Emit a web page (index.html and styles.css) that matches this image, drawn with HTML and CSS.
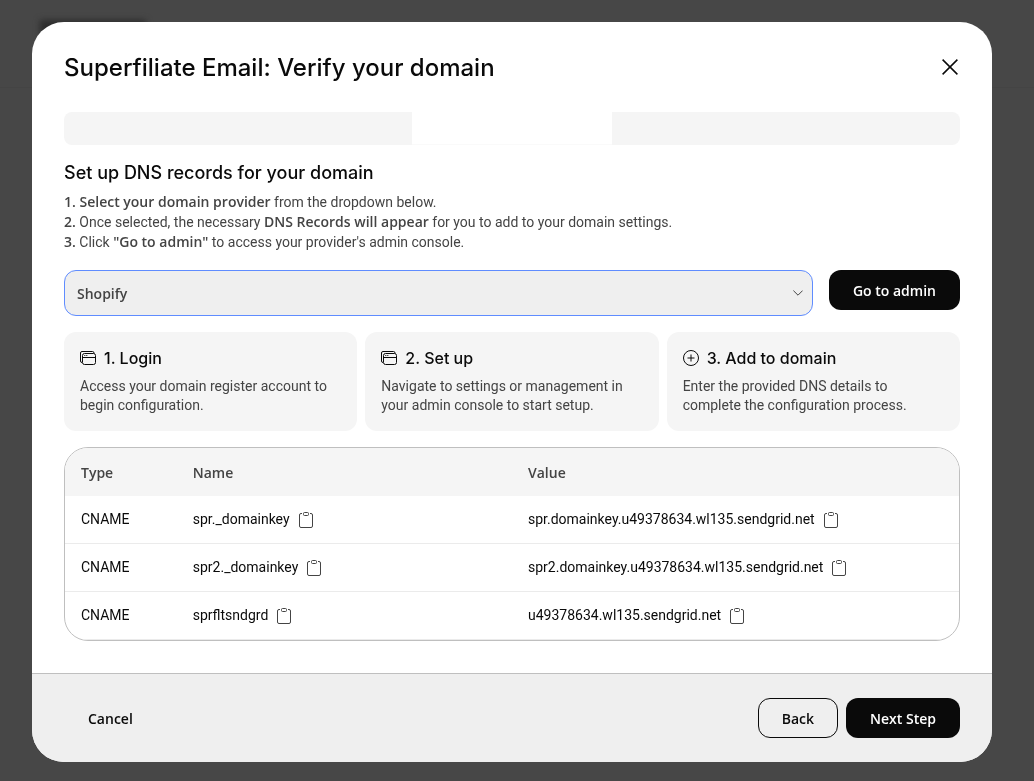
FILE: index.html
```html
<!DOCTYPE html>
<html lang="en">
<head>
    <meta charset="UTF-8">
    <meta name="viewport" content="width=device-width, initial-scale=1.0">
    <title>Superfiliate Email: Verify your domain</title>
    <link rel="stylesheet" href="styles.css">
</head>
<body>

    <svg class="sprite" width="0" height="0" aria-hidden="true">
        <symbol id="icon-window" viewBox="0 0 16 16">
            <path d="M2 12.5A1.5 1.5 0 0 1 .5 11V3A1.5 1.5 0 0 1 2 1.5h10.5A1.5 1.5 0 0 1 14 3v.5"/>
            <rect x="2.5" y="3.5" width="13" height="11" rx="2"/>
            <path d="M2.5 7.5h13M4.3 5.5h1M6.3 5.5h1"/>
        </symbol>
        <symbol id="icon-plus" viewBox="0 0 16 16">
            <circle cx="8" cy="8" r="7.5"/>
            <path d="M8 4.5v7M4.5 8h7"/>
        </symbol>
        <symbol id="icon-copy" viewBox="0 0 14 16">
            <path d="M3 1.5H2A1.5 1.5 0 0 0 .5 3v11A1.5 1.5 0 0 0 2 15.5h10a1.5 1.5 0 0 0 1.5-1.5V3A1.5 1.5 0 0 0 12 1.5h-1"/>
            <rect x="4.5" y=".5" width="5" height="3" rx="1"/>
        </symbol>
    </svg>

    <div class="backdrop">
        <div class="page-title-blur"></div>
    </div>

    <div class="overlay">
        <div class="modal" role="dialog" aria-modal="true" aria-labelledby="modal-title">
            <div class="modal-body">
                <div class="modal-header">
                    <h1 id="modal-title">Superfiliate Email: Verify your domain</h1>
                    <button type="button" class="close" aria-label="Close">
                        <svg width="16" height="16" viewBox="0 0 16 16"><path d="M.6.6l14.8 14.8M15.4.6L.6 15.4"/></svg>
                    </button>
                </div>

                <div class="steps">
                    <div class="step"></div>
                    <div class="step current"></div>
                    <div class="step"></div>
                </div>

                <h2>Set up DNS records for your domain</h2>
                <div class="instructions">
                    <p><strong>1. Select your domain provider</strong> from the dropdown below.</p>
                    <p><strong>2.</strong> Once selected, the necessary <strong>DNS Records will appear</strong> for you to add to your domain settings.</p>
                    <p><strong>3.</strong> Click <strong>"Go to admin"</strong> to access your provider's admin console.</p>
                </div>

                <div class="provider">
                    <div class="select-wrap">
                        <select id="provider" aria-label="Domain provider">
                            <option>Shopify</option>
                        </select>
                        <svg class="chevron" width="10" height="6" viewBox="0 0 10 6"><path d="M.4.6L5 5.2 9.6.6"/></svg>
                    </div>
                    <button type="button" class="btn btn-dark">Go to admin</button>
                </div>

                <div class="cards">
                    <div class="card">
                        <h3><svg class="icon" width="16" height="16"><use href="#icon-window"/></svg>1. Login</h3>
                        <p>Access your domain register account to begin configuration.</p>
                    </div>
                    <div class="card">
                        <h3><svg class="icon" width="16" height="16"><use href="#icon-window"/></svg>2. Set up</h3>
                        <p>Navigate to settings or management in your admin console to start setup.</p>
                    </div>
                    <div class="card">
                        <h3><svg class="icon" width="16" height="16"><use href="#icon-plus"/></svg>3. Add to domain</h3>
                        <p>Enter the provided DNS details to complete the configuration process.</p>
                    </div>
                </div>

                <div class="table-wrap">
                    <table>
                        <thead>
                            <tr>
                                <th class="col-type">Type</th>
                                <th class="col-name">Name</th>
                                <th>Value</th>
                            </tr>
                        </thead>
                        <tbody>
                            <tr>
                                <td>CNAME</td>
                                <td><div class="record">spr._domainkey <button type="button" class="copy" aria-label="Copy name"><svg width="14" height="16"><use href="#icon-copy"/></svg></button></div></td>
                                <td><div class="record">spr.domainkey.u49378634.wl135.sendgrid.net <button type="button" class="copy" aria-label="Copy value"><svg width="14" height="16"><use href="#icon-copy"/></svg></button></div></td>
                            </tr>
                            <tr>
                                <td>CNAME</td>
                                <td><div class="record">spr2._domainkey <button type="button" class="copy" aria-label="Copy name"><svg width="14" height="16"><use href="#icon-copy"/></svg></button></div></td>
                                <td><div class="record">spr2.domainkey.u49378634.wl135.sendgrid.net <button type="button" class="copy" aria-label="Copy value"><svg width="14" height="16"><use href="#icon-copy"/></svg></button></div></td>
                            </tr>
                            <tr>
                                <td>CNAME</td>
                                <td><div class="record">sprfltsndgrd <button type="button" class="copy" aria-label="Copy name"><svg width="14" height="16"><use href="#icon-copy"/></svg></button></div></td>
                                <td><div class="record">u49378634.wl135.sendgrid.net <button type="button" class="copy" aria-label="Copy value"><svg width="14" height="16"><use href="#icon-copy"/></svg></button></div></td>
                            </tr>
                        </tbody>
                    </table>
                </div>
            </div>

            <div class="modal-footer">
                <button type="button" class="btn btn-text">Cancel</button>
                <div class="footer-actions">
                    <button type="button" class="btn btn-outline">Back</button>
                    <button type="button" class="btn btn-dark">Next Step</button>
                </div>
            </div>
        </div>
    </div>

</body>
</html>
```
FILE: styles.css
```css
* {
    box-sizing: border-box;
}
body {
    margin: 0;
    background-color: #474747;
    color: #444;
    font-family: Roboto, "Noto Sans", sans-serif;
    font-size: 14px;
    line-height: 19px;
}
h1, h2, h3, p {
    margin: 0;
}
h1, h2, h3 {
    color: #0a0a0a;
    font-family: Inter, sans-serif;
    font-weight: 500;
}
strong, th, button, select {
    font-family: "Open Sans", "Noto Sans", sans-serif;
    font-size: 14px;
    font-weight: 600;
}
button, select {
    cursor: pointer;
}
svg {
    display: block;
    flex-shrink: 0;
    fill: none;
    stroke: currentColor;
}
.sprite {
    position: absolute;
}

/* dimmed page behind the dialog */
.backdrop {
    position: fixed;
    top: 0;
    left: 0;
    right: 0;
    height: 88px;
    padding: 20px 40px;
    border-bottom: 1px solid #444;
}
.page-title-blur {
    width: 106px;
    height: 16px;
    background-color: #2c2c2c;
    filter: blur(3px);
}

.overlay {
    position: relative;
    padding: 22px 42px 19px 32px;
}
.modal {
    background-color: #fff;
    border-radius: 32px;
    overflow: hidden;
}
.modal-body {
    padding: 30px 32px 32px;
}
.modal-header {
    display: flex;
    align-items: flex-start;
    justify-content: space-between;
    margin-bottom: 28px;
}
h1 {
    font-size: 24px;
    line-height: 32px;
}
.close {
    padding: 7px 2px;
    border: none;
    background: none;
    color: #0a0a0a;
}
.close svg {
    stroke-width: 1.5;
}

.steps {
    display: flex;
    margin-bottom: 16px;
    background-color: #f5f5f5;
    border-radius: 8px;
}
.step {
    flex: 1;
    height: 33px;
}
.step.current {
    flex: 0 0 200px;
    background-color: #fff;
    border-bottom: 1px solid #fafafa;
}

h2 {
    margin-bottom: 8px;
    font-size: 18px;
    line-height: 23px;
}
.instructions {
    margin-bottom: 18px;
}

.provider {
    display: flex;
    align-items: flex-start;
    gap: 16px;
    margin-bottom: 16px;
}
.select-wrap {
    position: relative;
    flex: 1;
}
.select-wrap select {
    display: block;
    width: 100%;
    height: 46px;
    padding: 0 32px 0 12px;
    border: 1px solid #5f8cff;
    border-radius: 12px;
    background-color: #efefef;
    color: #444;
    appearance: none;
    outline: none;
}
.chevron {
    position: absolute;
    top: 20px;
    right: 10px;
    pointer-events: none;
}

.btn {
    height: 40px;
    padding: 0 23px;
    border: 1px solid transparent;
    border-radius: 12px;
    color: #0a0a0a;
}
.btn-dark {
    background-color: #0a0a0a;
    color: #fff;
}
.btn-outline {
    background: none;
    border-color: #0a0a0a;
}
.btn-text {
    background: none;
}

.cards {
    display: grid;
    grid-template-columns: repeat(3, 1fr);
    gap: 8px;
    margin-bottom: 16px;
}
.card {
    padding: 16px;
    background-color: #f5f5f5;
    border-radius: 12px;
}
.card h3 {
    display: flex;
    align-items: center;
    gap: 8px;
    margin-bottom: 9px;
    font-size: 16px;
    line-height: 20px;
}

.table-wrap {
    border: 1px solid #bfbfbf;
    border-radius: 24px;
    overflow: hidden;
}
table {
    width: 100%;
    border-collapse: separate;
    border-spacing: 0;
    table-layout: fixed;
}
th, td {
    height: 48px;
    padding: 0 16px;
    text-align: left;
}
th {
    background-color: #f5f5f5;
}
td {
    border-bottom: 1px solid #ebebeb;
    color: #0a0a0a;
}
.col-type {
    width: 12.5%;
}
.col-name {
    width: 37.5%;
}
.record {
    display: flex;
    align-items: center;
    gap: 9px;
}
.copy {
    padding: 0;
    border: none;
    background: none;
    color: #444;
}

.modal-footer {
    display: flex;
    justify-content: space-between;
    padding: 24px 32px;
    border-top: 1px solid #bfbfbf;
    background-color: #efefef;
}
.footer-actions {
    display: flex;
    gap: 8px;
}
```
